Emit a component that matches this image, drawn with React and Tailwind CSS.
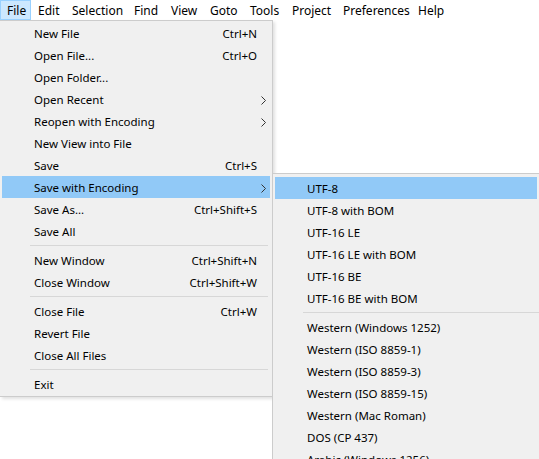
import React from 'react'

const menubar = [
  { label: 'File', w: 'w-[31px]', active: true },
  { label: 'Edit', w: 'w-[34px]' },
  { label: 'Selection', w: 'w-[62px]' },
  { label: 'Find', w: 'w-[37px]' },
  { label: 'View', w: 'w-[39px]' },
  { label: 'Goto', w: 'w-[40px]' },
  { label: 'Tools', w: 'w-[42px]' },
  { label: 'Project', w: 'w-[51px]' },
  { label: 'Preferences', w: 'w-[75px]' },
  { label: 'Help', w: 'w-[40px]' },
]

const fileMenu = [
  { label: 'New File', key: 'Ctrl+N' },
  { label: 'Open File...', key: 'Ctrl+O' },
  { label: 'Open Folder...' },
  { label: 'Open Recent', sub: true },
  { label: 'Reopen with Encoding', sub: true },
  { label: 'New View into File' },
  { label: 'Save', key: 'Ctrl+S' },
  { label: 'Save with Encoding', sub: true, active: true },
  { label: 'Save As...', key: 'Ctrl+Shift+S' },
  { label: 'Save All' },
  { sep: true },
  { label: 'New Window', key: 'Ctrl+Shift+N' },
  { label: 'Close Window', key: 'Ctrl+Shift+W' },
  { sep: true },
  { label: 'Close File', key: 'Ctrl+W' },
  { label: 'Revert File' },
  { label: 'Close All Files' },
  { sep: true },
  { label: 'Exit' },
]

const encodings = [
  { label: 'UTF-8', active: true },
  { label: 'UTF-8 with BOM' },
  { label: 'UTF-16 LE' },
  { label: 'UTF-16 LE with BOM' },
  { label: 'UTF-16 BE' },
  { label: 'UTF-16 BE with BOM' },
  { sep: true },
  { label: 'Western (Windows 1252)' },
  { label: 'Western (ISO 8859-1)' },
  { label: 'Western (ISO 8859-3)' },
  { label: 'Western (ISO 8859-15)' },
  { label: 'Western (Mac Roman)' },
  { label: 'DOS (CP 437)' },
  { label: 'Arabic (Windows 1256)' },
]

const Chevron = () => (
  <svg width="5" height="9" viewBox="0 0 5 9" className="text-[#333]">
    <path d="M0.5 0.5 L4.5 4.5 L0.5 8.5" fill="none" stroke="currentColor" strokeWidth="1" />
  </svg>
)

const Separator = () => (
  <div className="h-[7px] flex items-center pl-[28px] pr-[2px]">
    <div className="h-px w-full bg-[#d7d7d7]" />
  </div>
)

const MenuItem = ({ item }) => {
  if (item.sep) return <Separator />
  return (
    <div
      className={`h-[22px] flex items-center pt-[2px] pl-[32px] pr-[11px] ${
        item.active ? 'bg-[#91c9f7]' : ''
      }`}
    >
      <span className="flex-1">{item.label}</span>
      {item.key && <span className="mr-[2px]">{item.key}</span>}
      {item.sub && (
        <span className="mr-[-7px] flex items-center">
          <Chevron />
        </span>
      )}
    </div>
  )
}

export default function App() {
  return (
    <div
      className="relative w-[539px] h-[459px] bg-white overflow-hidden text-[11.5px] text-black"
      style={{ fontFamily: '"Noto Sans", "Open Sans", sans-serif' }}
    >
      {/* Menu bar */}
      <div className="h-[20px] flex bg-white text-[12px]">
        {menubar.map((m) => (
          <div
            key={m.label}
            className={`${m.w} h-[20px] flex items-center pt-[2px] pl-[6px] border ${
              m.active ? 'bg-[#cce8ff] border-[#99d1ff]' : 'border-transparent'
            }`}
          >
            {m.label}
          </div>
        ))}
      </div>

      {/* File menu */}
      <div className="absolute left-0 top-[20px] w-[273px] border-t border-r border-b border-[#cccccc] bg-[#f0f0f0] px-[2px] pt-[1px] pb-px shadow-[2px_2px_3px_rgba(0,0,0,0.12)]">
        {fileMenu.map((item, i) => (
          <MenuItem key={i} item={item} />
        ))}
      </div>

      {/* Encoding submenu */}
      <div className="absolute left-[272px] top-[173px] w-[280px] border-t border-l border-[#cccccc] bg-[#f0f0f0] pl-[2px] pt-[3px]">
        {encodings.map((item, i) =>
          item.sep ? (
            <Separator key={i} />
          ) : (
            <div
              key={i}
              className={`h-[22px] flex items-center pt-[2px] pl-[32px] mr-[15px] ${
                item.active ? 'bg-[#91c9f7]' : ''
              }`}
            >
              {item.label}
            </div>
          )
        )}
      </div>
    </div>
  )
}
